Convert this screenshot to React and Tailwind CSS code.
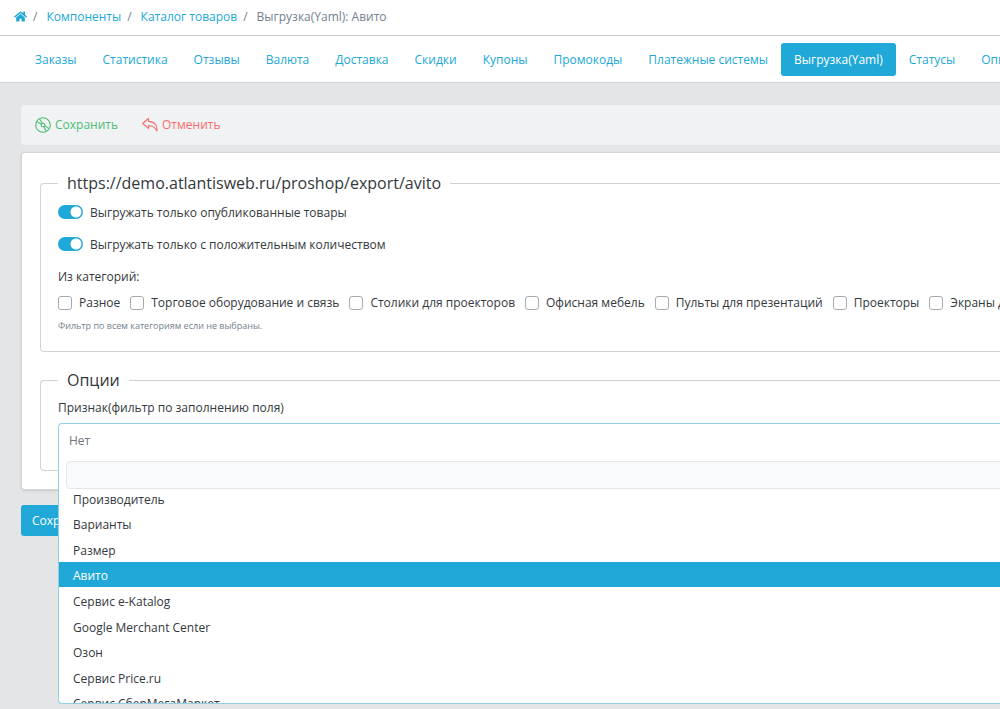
import { useState } from "react";
import { FaHome } from "react-icons/fa";

const tabs = [
  "Заказы",
  "Статистика",
  "Отзывы",
  "Валюта",
  "Доставка",
  "Скидки",
  "Купоны",
  "Промокоды",
  "Платежные системы",
  "Выгрузка(Yaml)",
  "Статусы",
  "Опции",
];

const categories = [
  "Разное",
  "Торговое оборудование и связь",
  "Столики для проекторов",
  "Офисная мебель",
  "Пульты для презентаций",
  "Проекторы",
  "Экраны для проекторов",
];

const options = [
  "Производитель",
  "Варианты",
  "Размер",
  "Авито",
  "Сервис e-Katalog",
  "Google Merchant Center",
  "Озон",
  "Сервис Price.ru",
  "Сервис СберМегаМаркет",
];

function DiscIcon() {
  return (
    <svg
      className="size-4"
      viewBox="0 0 16 16"
      fill="none"
      stroke="currentColor"
      strokeWidth="1.1"
      aria-hidden="true"
    >
      <circle cx="8" cy="8" r="7.3" />
      <circle cx="8" cy="8" r="1.8" />
      <path d="M2.2 4.6 6.3 7.2M4.8 2.2 7.3 6.2M9.7 8.8l4.1 2.6M8.7 9.8l2.5 4" />
    </svg>
  );
}

function UndoIcon() {
  return (
    <svg
      className="size-4"
      viewBox="0 0 16 16"
      fill="none"
      stroke="currentColor"
      strokeWidth="1.1"
      strokeLinejoin="round"
      aria-hidden="true"
    >
      <path d="M6.5 1.5.7 6.5l5.8 4.9V8.7c4 0 6.8 1.1 8.3 5.3.9-5.5-2.3-9.4-8.3-9.6Z" />
    </svg>
  );
}

function Switch({ id, label }) {
  return (
    <div className="flex h-5 items-center gap-[7px]">
      <input
        id={id}
        type="checkbox"
        role="switch"
        defaultChecked
        className="mb-0.5 h-3.5 w-[25px] shrink-0 appearance-none rounded-full bg-gray-300 bg-[radial-gradient(circle_at_7px_7px,white_5px,transparent_6px)] checked:bg-[#20a8d8] checked:bg-[radial-gradient(circle_at_18px_7px,white_5px,transparent_6px)]"
      />
      <label htmlFor={id}>{label}</label>
    </div>
  );
}

function Group({ title, children }) {
  return (
    <fieldset className="min-w-0 rounded-l border border-r-0 border-[#cfd3d6] pb-[17px] pl-[17px]">
      <legend className="px-[9px] text-base leading-6">{title}</legend>
      {children}
    </fieldset>
  );
}

function FieldSelect() {
  const [value, setValue] = useState("Нет");
  const [active, setActive] = useState("Авито");

  return (
    <div className="relative">
      <button
        type="button"
        id="field"
        aria-haspopup="listbox"
        aria-expanded="true"
        className="block h-[30px] w-full rounded-tl-sm border-t border-l border-[#90cfe4] bg-white pt-1 pl-2.5 text-left text-[#6f757b]"
      >
        {value}
      </button>
      <div className="absolute inset-x-0 top-full rounded-bl-sm border-b border-l border-[#90cfe4] bg-white pt-2">
        <input
          type="text"
          aria-label="Поиск"
          className="ml-[7px] block h-7 w-full rounded-sm border border-[#e4e7ea] bg-[#f9fafb] px-2 outline-none"
        />
        <div className="h-[214px] overflow-hidden">
          <div role="listbox" aria-labelledby="field-label" className="-mt-1 grid h-[230px] grid-rows-9">
            {options.map((option) => (
              <button
                key={option}
                type="button"
                role="option"
                aria-selected={option === active}
                onMouseEnter={() => setActive(option)}
                onClick={() => setValue(option)}
                className="px-3.5 pt-1 text-left aria-selected:bg-[#20a8d8] aria-selected:text-white"
              >
                {option}
              </button>
            ))}
          </div>
        </div>
      </div>
    </div>
  );
}

export default function App() {
  return (
    <div className="min-h-screen overflow-x-hidden bg-[#e4e5e6] font-['Open_Sans','Noto_Sans',sans-serif] text-[12px] leading-5 text-[#33383d]">
      <nav aria-label="breadcrumb" className="border-b border-[#c8ced3] bg-white">
        <ol className="flex h-[35px] items-center gap-1.5 pb-0.5 pl-3.5 text-[#73818f]">
          <li>
            <a href="#" aria-label="Главная" className="block text-[#20a8d8]">
              <FaHome className="size-[13px]" />
            </a>
          </li>
          <li aria-hidden="true" className="pr-[3px]">/</li>
          <li>
            <a href="#" className="text-[#20a8d8]">Компоненты</a>
          </li>
          <li aria-hidden="true" className="pr-[3px]">/</li>
          <li>
            <a href="#" className="text-[#20a8d8]">Каталог товаров</a>
          </li>
          <li aria-hidden="true" className="pr-[3px]">/</li>
          <li>Выгрузка(Yaml): Авито</li>
        </ol>
      </nav>

      <nav className="flex border-b border-[#d0d3d5] bg-white pt-[7px] pb-1.5 pl-[22px]">
        {tabs.map((tab) => (
          <a
            key={tab}
            href="#"
            aria-current={tab === "Выгрузка(Yaml)" ? "page" : undefined}
            className="h-[33px] shrink-0 rounded-[3px] px-[13px] leading-[34px] text-[#20a8d8] aria-[current=page]:bg-[#20a8d8] aria-[current=page]:text-white"
          >
            {tab}
          </a>
        ))}
      </nav>

      <main className="pt-[22px] pl-[21px]">
        <div className="flex h-10 items-center gap-6 rounded-l bg-[#f0f2f4] pl-3.5">
          <button type="button" className="flex items-center gap-1 text-[#4dbd74]">
            <DiscIcon />
            Сохранить
          </button>
          <button type="button" className="flex items-center gap-1 text-[#f86c6b]">
            <UndoIcon />
            Отменить
          </button>
        </div>

        <form>
          <div className="mt-[7px] rounded-l border border-r-0 border-[#d3d6d8] bg-white py-[18px] pl-[18px] shadow-sm">
            <Group title="https://demo.atlantisweb.ru/proshop/export/avito">
              <div className="flex flex-col gap-3 pt-2">
                <Switch id="published" label="Выгружать только опубликованные товары" />
                <Switch id="positive" label="Выгружать только с положительным количеством" />
                <div role="group" aria-labelledby="categories-label">
                  <p id="categories-label">Из категорий:</p>
                  <div className="mt-1.5 flex gap-2.5 overflow-hidden">
                    {categories.map((category) => (
                      <label key={category} className="flex shrink-0 items-center gap-[7px]">
                        <input
                          type="checkbox"
                          className="size-3.5 appearance-none rounded-[3px] border border-[#a5abb0] bg-white checked:bg-[#20a8d8]"
                        />
                        {category}
                      </label>
                    ))}
                  </div>
                  <small className="mt-[5px] block text-[9px] leading-4 text-[#73818f]">
                    Фильтр по всем категориям если не выбраны.
                  </small>
                </div>
              </div>
            </Group>

            <div className="mt-4">
              <Group title="Опции">
                <label id="field-label" htmlFor="field" className="mb-[5px] block pt-1.5">
                  Признак(фильтр по заполнению поля)
                </label>
                <FieldSelect />
              </Group>
            </div>
          </div>

          <button
            type="submit"
            className="mt-[15px] block h-[31px] rounded-[3px] bg-[#20a8d8] px-[11px] text-white"
          >
            Сохранить
          </button>
        </form>
      </main>
    </div>
  );
}
